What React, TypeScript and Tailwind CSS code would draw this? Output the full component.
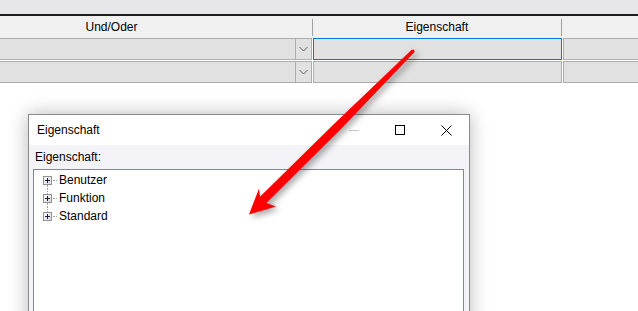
import React from "react";

/* Grid-Ausschnitt mit Eigenschaft-Dialog und rotem Hinweis-Pfeil */

const font = { fontFamily: '"Liberation Sans", Arial, sans-serif' };

function Chevron() {
  return (
    <svg width="9" height="6" viewBox="0 0 9 6" className="text-[#5f5f5f]">
      <path d="M0.5 1 L4.5 5 L8.5 1" fill="none" stroke="currentColor" strokeWidth="1" />
    </svg>
  );
}

function ComboCell() {
  return (
    <div className="flex h-[22px] w-[401px] shrink-0 border border-[#adadad] bg-[#e1e1e1]">
      <div className="flex-1" />
      <div className="flex w-[16px] items-center justify-center border-l border-[#adadad]">
        <Chevron />
      </div>
    </div>
  );
}

function GridRow({ focused }: { focused?: boolean }) {
  return (
    <div className="flex h-[23px] gap-px">
      <ComboCell />
      <div
        className={
          focused
            ? "h-[22px] w-[249px] shrink-0 border border-[#0078d7] bg-[#e1e1e1]"
            : "h-[22px] w-[249px] shrink-0 border border-[#adadad] bg-[#e1e1e1]"
        }
      />
      <div className="h-[22px] w-[200px] shrink-0 border border-[#adadad] bg-[#e1e1e1]" />
    </div>
  );
}

function PlusBox() {
  return (
    <svg width="9" height="9" viewBox="0 0 9 9">
      <defs>
        <linearGradient id="pb" x1="0" y1="0" x2="1" y2="1">
          <stop offset="0" stopColor="#ffffff" />
          <stop offset="1" stopColor="#d6d6d6" />
        </linearGradient>
      </defs>
      <rect x="0.5" y="0.5" width="8" height="8" fill="url(#pb)" stroke="#919191" />
      <path d="M2 4.5 H7 M4.5 2 V7" stroke="#1c1c3c" strokeWidth="1" />
    </svg>
  );
}

const TREE = ["Benutzer", "Funktion", "Standard"];

function TreeRow({ label, first, last }: { label: string; first: boolean; last: boolean }) {
  return (
    <div className="flex h-[18px] items-center pl-[9px]">
      <div className="flex h-[18px] w-[9px] flex-col items-center">
        <div className={first ? "h-[5px]" : "h-[5px] border-l border-dotted border-[#a0a0a0]"} />
        <PlusBox />
        <div className={last ? "h-[4px]" : "h-[4px] border-l border-dotted border-[#a0a0a0]"} />
      </div>
      <div className="ml-px w-[4px] border-t border-dotted border-[#a0a0a0]" />
      <span className="ml-[2px] text-[12px] text-black">{label}</span>
    </div>
  );
}

function Arrow() {
  return (
    <svg
      width="638"
      height="311"
      viewBox="0 0 638 311"
      className="pointer-events-none absolute left-0 top-0"
      style={{ filter: "drop-shadow(3px 3px 3px rgba(0,0,0,0.35))" }}
    >
      <polygon
        points="414.3,52.3 340,130 266.4,203.1 276,206.5 249,214.5 259,188.5 260,196.7 334,124 411.7,49.7"
        fill="#ff0000"
      />
      <circle cx="413" cy="51" r="1.6" fill="#ff0000" />
    </svg>
  );
}

export default function App() {
  return (
    <div className="relative h-[311px] w-[638px] overflow-hidden bg-white" style={font}>
      {/* ── Grid ── */}
      <div className="h-[14px] bg-[#e6e6eb]" />
      <div className="h-[2px] bg-[#1e1e1e]" />
      <div className="ml-[-89px]">
        <div className="flex h-[22px] items-center bg-[#f0f0f0] text-[12px] text-black">
          <div className="flex w-[401px] shrink-0 justify-center">Und/Oder</div>
          <div className="h-[17px] w-px bg-[#a0a0a0]" />
          <div className="flex w-[249px] shrink-0 justify-center">Eigenschaft</div>
          <div className="h-[17px] w-px bg-[#a0a0a0]" />
          <div className="w-[200px]" />
        </div>
        <GridRow focused />
        <GridRow />
      </div>

      {/* ── Dialog ── */}
      <div className="ml-[28px] mt-[30px] w-[442px] border border-[#8b8b8b] bg-[#f3f3f8] shadow-[0_0_18px_rgba(0,0,0,0.28)]">
        <div className="flex h-[30px] items-center bg-white">
          <span className="flex-1 pl-[8px] text-[12px] text-black">Eigenschaft</span>
          <div className="flex h-full w-[46px] items-center justify-center">
            <div className="h-px w-[10px] bg-[#c8c8c8]" />
          </div>
          <div className="flex h-full w-[46px] items-center justify-center">
            <div className="h-[10px] w-[10px] border border-black" />
          </div>
          <div className="flex h-full w-[46px] items-center justify-center">
            <svg width="11" height="11" viewBox="0 0 11 11">
              <path d="M0.5 0.5 L10.5 10.5 M10.5 0.5 L0.5 10.5" stroke="#000" strokeWidth="1" />
            </svg>
          </div>
        </div>
        <div className="flex h-[24px] items-center pl-[6px] text-[12px] text-black">Eigenschaft:</div>
        <div className="ml-[4px] h-[200px] w-[431px] border border-[#828790] bg-white pt-px">
          {TREE.map((t, i) => (
            <TreeRow key={t} label={t} first={i === 0} last={i === TREE.length - 1} />
          ))}
        </div>
      </div>

      <Arrow />
    </div>
  );
}
